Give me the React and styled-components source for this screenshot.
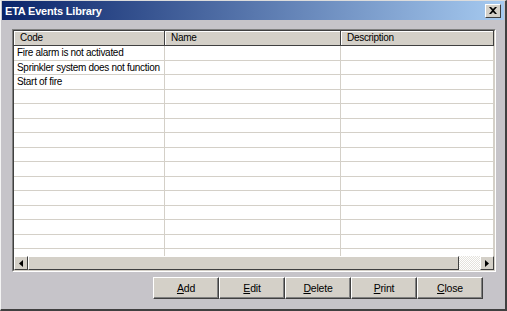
import styled, { createGlobalStyle } from 'styled-components';

const GlobalStyle = createGlobalStyle`
	html, body {
		margin: 0;
		padding: 0;
		background: #c6c4c9;
	}
`;

const Window = styled.div`
	width: 507px;
	height: 311px;
	box-sizing: border-box;
	background: #c6c4c9;
	border-top: 1px solid #dcdcdc;
	border-left: 1px solid #f4f4f4;
	border-right: 2px solid #404040;
	border-bottom: 2px solid #404040;
	display: flex;
	flex-direction: column;
	font-family: 'Liberation Sans', Arial, sans-serif;
	font-size: 10px;
	letter-spacing: -0.3px;
	color: #000;
	overflow: hidden;
`;

const TitleBar = styled.div`
	height: 19px;
	margin: 0 1px;
	display: flex;
	align-items: center;
	justify-content: space-between;
	padding: 0 3px 0 3px;
	background: linear-gradient(to right, #0a246a, #a6caf0);
	color: #fff;
	font-weight: bold;
	font-size: 11px;
	letter-spacing: -0.2px;
`;

const CloseButton = styled.div`
	width: 16px;
	height: 14px;
	box-sizing: border-box;
	background: #d4d0c8;
	border: 1px solid;
	border-color: #fff #404040 #404040 #fff;
	display: flex;
	align-items: center;
	justify-content: center;
`;

const Body = styled.div`
	flex: 1;
	display: flex;
	flex-direction: column;
	padding: 9px 9px 0 11px;
`;

const Grid = styled.div`
	height: 243px;
	box-sizing: border-box;
	border: 1px solid;
	border-color: #808080 #fff #fff #808080;
	display: flex;
	flex-direction: column;
`;

const GridInner = styled.div`
	flex: 1;
	border: 1px solid;
	border-color: #404040 #d4d0c8 #d4d0c8 #404040;
	display: flex;
	flex-direction: column;
	background: #fff;
	overflow: hidden;
`;

const Table = styled.div`
	flex: 1;
	display: grid;
	grid-template-columns: 151px 176px 1fr;
	grid-template-rows: 15px;
	grid-auto-rows: 14.5px;
	align-content: start;
	overflow: hidden;
`;

const HeaderCell = styled.div`
	box-sizing: border-box;
	background: #d4d0c8;
	border-right: 1px solid #404040;
	border-bottom: 1px solid #404040;
	box-shadow: inset 1px 1px 0 #fff;
	padding-left: 6px;
	line-height: 14px;
	white-space: nowrap;
`;

const Cell = styled.div`
	box-sizing: border-box;
	border-right: 1px solid #d4d0c8;
	border-bottom: 1px solid #d4d0c8;
	padding-left: 3px;
	line-height: 14px;
	white-space: nowrap;
	overflow: hidden;
`;

const ScrollBar = styled.div`
	height: 14px;
	display: flex;
	background: #d4d0c8;
`;

const Arrow = styled.div`
	width: 14px;
	height: 14px;
	box-sizing: border-box;
	background: #d4d0c8;
	border: 1px solid;
	border-color: #fff #404040 #404040 #fff;
	display: flex;
	align-items: center;
	justify-content: center;
`;

const Thumb = styled.div`
	flex: 1;
	box-sizing: border-box;
	background: #d4d0c8;
	border: 1px solid;
	border-color: #fff #404040 #404040 #fff;
`;

const Track = styled.div`
	width: 21px;
	background-image: repeating-conic-gradient(#ffffff 0 25%, #e4e2dc 0 50%);
	background-size: 2px 2px;
`;

const ButtonRow = styled.div`
	display: flex;
	padding: 5px 0 0 141px;
`;

const Button = styled.button`
	width: 66px;
	height: 22px;
	box-sizing: border-box;
	background: #d4d0c8;
	border: 1px solid;
	border-color: #fff #404040 #404040 #fff;
	box-shadow: inset -1px -1px 0 #808080;
	font-family: 'Liberation Sans', Arial, sans-serif;
	font-size: 10.5px;
	letter-spacing: -0.2px;
	color: #000;
	padding: 0;
	cursor: pointer;
`;

const rows = ['Fire alarm is not activated', 'Sprinkler system does not function', 'Start of fire'];

const totalRows = 15;

const buttons = [
	['A', 'dd'],
	['E', 'dit'],
	['D', 'elete'],
	['P', 'rint'],
	['C', 'lose'],
];

const App = () => {
	const body = [];
	for (let i = 0; i < totalRows; i++) {
		body.push(
			<Cell key={`c${i}`}>{rows[i] || ''}</Cell>,
			<Cell key={`n${i}`} />,
			<Cell key={`d${i}`} />
		);
	}

	return (
		<>
			<GlobalStyle />
			<Window>
				<TitleBar>
					<span>ETA Events Library</span>
					<CloseButton>
						<svg width="8" height="7" viewBox="0 0 8 7">
							<path d="M0 0h2l2 2 2-2h2L5 3.5 8 7H6L4 5 2 7H0l3-3.5z" fill="#000" />
						</svg>
					</CloseButton>
				</TitleBar>
				<Body>
					<Grid>
						<GridInner>
							<Table>
								<HeaderCell>Code</HeaderCell>
								<HeaderCell>Name</HeaderCell>
								<HeaderCell>Description</HeaderCell>
								{body}
							</Table>
							<ScrollBar>
								<Arrow>
									<svg width="4" height="7" viewBox="0 0 4 7">
										<path d="M4 0v7L0 3.5z" fill="#000" />
									</svg>
								</Arrow>
								<Thumb />
								<Track />
								<Arrow>
									<svg width="4" height="7" viewBox="0 0 4 7">
										<path d="M0 0v7l4-3.5z" fill="#000" />
									</svg>
								</Arrow>
							</ScrollBar>
						</GridInner>
					</Grid>
					<ButtonRow>
						{buttons.map(([k, rest]) => (
							<Button key={k}>
								<u>{k}</u>
								{rest}
							</Button>
						))}
					</ButtonRow>
				</Body>
			</Window>
		</>
	);
};

export default App;
